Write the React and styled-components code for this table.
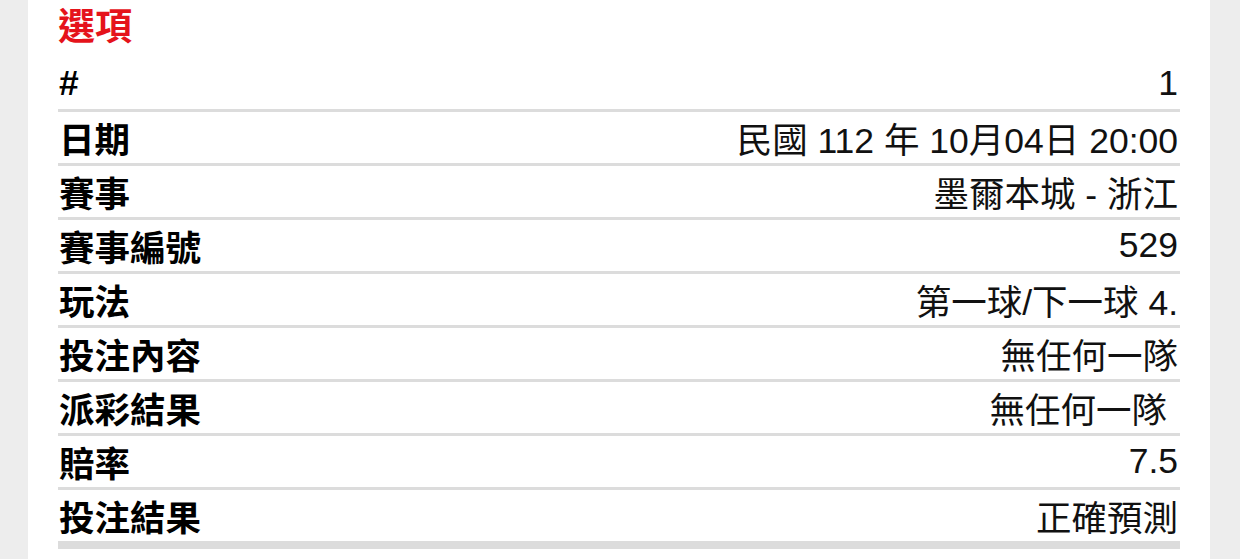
import React from "react";
import styled, { createGlobalStyle } from "styled-components";

const GlobalStyle = createGlobalStyle`
  html, body {
    margin: 0;
    padding: 0;
    background: #ededed;
  }
  body {
    font-family: "Liberation Sans", "Noto Sans CJK TC", sans-serif;
  }
`;

const Page = styled.div`
  display: flex;
  justify-content: flex-start;
  padding-left: 28px;
  height: 559px;
`;

const Panel = styled.div`
  width: 1182px;
  background: #fff;
  padding: 0 30px;
  box-sizing: border-box;
`;

const Title = styled.div`
  height: 58px;
  box-sizing: border-box;
  padding-top: 2px;
  line-height: 44px;
  font-size: 37px;
  font-weight: 700;
  color: #e5131b;
  font-family: "Noto Sans CJK TC", sans-serif;
`;

const Row = styled.div`
  display: flex;
  align-items: center;
  justify-content: space-between;
  height: 51px;
  border-bottom: ${(p) => (p.last ? "8px" : "3px")} solid #dcdcdc;
`;

const Label = styled.div`
  font-family: "Liberation Sans", "Noto Sans CJK TC", sans-serif;
  font-size: 35.5px;
  font-weight: 700;
  color: #000;
  padding-left: 1px;
`;

const Value = styled.div`
  font-family: "Liberation Sans", "Noto Sans CJK TC", sans-serif;
  font-size: 35.5px;
  color: #111;
  padding-right: ${(p) => (p.inset ? "13px" : "2px")};
  white-space: nowrap;
`;

const rows = [
  ["#", "1"],
  ["日期", "民國 112 年 10月04日 20:00"],
  ["賽事", "墨爾本城 - 浙江"],
  ["賽事編號", "529"],
  ["玩法", "第一球/下一球 4."],
  ["投注內容", "無任何一隊"],
  ["派彩結果", "無任何一隊", true],
  ["賠率", "7.5"],
  ["投注結果", "正確預測"],
];

export default function App() {
  return (
    <>
      <GlobalStyle />
      <Page>
        <Panel>
          <Title>選項</Title>
          {rows.map(([label, value, inset], i) => (
            <Row key={label} last={i === rows.length - 1}>
              <Label>{label}</Label>
              <Value inset={inset}>{value}</Value>
            </Row>
          ))}
        </Panel>
      </Page>
    </>
  );
}
